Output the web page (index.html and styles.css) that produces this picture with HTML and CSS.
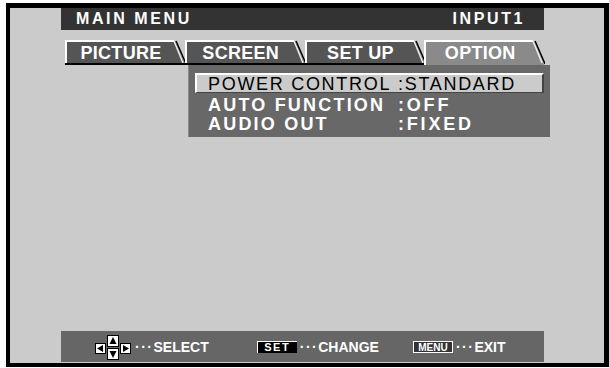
FILE: index.html
```html
<!DOCTYPE html>
<html lang="en">
<head>
    <meta charset="UTF-8">
    <title>Main Menu</title>
    <link rel="stylesheet" href="styles.css">
</head>
<body>
    <div class="screen">
        <div class="title-bar">
            <span>MAIN MENU</span>
            <span>INPUT1</span>
        </div>

        <div class="tabs">
            <div class="tab">
                <svg class="tab-shape" width="121" height="25" viewBox="0 0 121 25">
                    <polygon points="1,25 1,1 110,1 120,25" fill="#555"/>
                    <polyline points="1,25 1,1 109,1" fill="none" stroke="#fff" stroke-width="2"/>
                    <line x1="109" y1="1" x2="118" y2="23" stroke="#eee" stroke-width="1.5"/>
                    <line x1="111" y1="1" x2="121" y2="24" stroke="#000" stroke-width="1.5"/>
                    <line x1="0" y1="24" x2="121" y2="24" stroke="#000" stroke-width="2"/>
                </svg>
                <span>PICTURE</span>
            </div>
            <div class="tab">
                <svg class="tab-shape" width="121" height="25" viewBox="0 0 121 25">
                    <polygon points="1,25 1,1 110,1 120,25" fill="#555"/>
                    <polyline points="1,25 1,1 109,1" fill="none" stroke="#fff" stroke-width="2"/>
                    <line x1="109" y1="1" x2="118" y2="23" stroke="#eee" stroke-width="1.5"/>
                    <line x1="111" y1="1" x2="121" y2="24" stroke="#000" stroke-width="1.5"/>
                    <line x1="0" y1="24" x2="121" y2="24" stroke="#000" stroke-width="2"/>
                </svg>
                <span>SCREEN</span>
            </div>
            <div class="tab">
                <svg class="tab-shape" width="121" height="25" viewBox="0 0 121 25">
                    <polygon points="1,25 1,1 110,1 120,25" fill="#555"/>
                    <polyline points="1,25 1,1 109,1" fill="none" stroke="#fff" stroke-width="2"/>
                    <line x1="109" y1="1" x2="118" y2="23" stroke="#eee" stroke-width="1.5"/>
                    <line x1="111" y1="1" x2="121" y2="24" stroke="#000" stroke-width="1.5"/>
                    <line x1="0" y1="24" x2="121" y2="24" stroke="#000" stroke-width="2"/>
                </svg>
                <span>SET UP</span>
            </div>
            <div class="tab active">
                <svg class="tab-shape" width="121" height="25" viewBox="0 0 121 25">
                    <polygon points="1,25 1,1 110,1 120,25" fill="#8a8a8a"/>
                    <polyline points="1,25 1,1 109,1" fill="none" stroke="#fff" stroke-width="2"/>
                    <line x1="109" y1="1" x2="118" y2="23" stroke="#eee" stroke-width="1.5"/>
                    <line x1="111" y1="1" x2="121" y2="24" stroke="#000" stroke-width="1.5"/>
                </svg>
                <span>OPTION</span>
            </div>
        </div>

        <div class="panel">
            <div class="row selected">
                <span class="label">POWER CONTROL</span>
                <span class="value">:STANDARD</span>
            </div>
            <div class="row">
                <span class="label">AUTO FUNCTION</span>
                <span class="value">:OFF</span>
            </div>
            <div class="row">
                <span class="label">AUDIO OUT</span>
                <span class="value">:FIXED</span>
            </div>
        </div>

        <div class="footer">
            <div class="hint select">
                <svg class="arrows" width="37" height="25" viewBox="0 0 37 25">
                    <rect x="0.5" y="8.5" width="10" height="10" fill="#fff" stroke="#000"/>
                    <polygon points="2,13.5 8,10 8,17" fill="#000"/>
                    <rect x="12.5" y="0.5" width="11" height="11" fill="#fff" stroke="#000"/>
                    <polygon points="18,2 14.5,9 21.5,9" fill="#000"/>
                    <rect x="12.5" y="13.5" width="11" height="11" fill="#fff" stroke="#000"/>
                    <polygon points="18,23 14.5,16 21.5,16" fill="#000"/>
                    <rect x="25.5" y="8.5" width="10" height="10" fill="#fff" stroke="#000"/>
                    <polygon points="34,13.5 28,10 28,17" fill="#000"/>
                </svg>
                <span class="dots">···</span>SELECT
            </div>
            <div class="hint change">
                <span class="key key-set">SET</span>
                <span class="dots">···</span>CHANGE
            </div>
            <div class="hint exit">
                <span class="key key-menu">MENU</span>
                <span class="dots">···</span>EXIT
            </div>
        </div>
    </div>
</body>
</html>
```

FILE: styles.css
```css
body {
    margin: 0;
    background: #fff;
    font-family: "Liberation Sans", Arial, sans-serif;
}

.screen {
    box-sizing: border-box;
    width: 603px;
    height: 364px;
    margin: 3px 0 0 6px;
    background: #cbcbcb;
    border: 5px solid #000;
    border-left-width: 4px;
    border-bottom-width: 4px;
    padding: 0 60px 1px 51px;
    display: flex;
    flex-direction: column;
}

/* top bar */
.title-bar {
    height: 22px;
    background: #333;
    color: #fff;
    font-weight: bold;
    font-size: 16px;
    letter-spacing: 2.6px;
    display: flex;
    justify-content: space-between;
    align-items: center;
    padding: 0 19px 0 15px;
}

/* tabs */
.tabs {
    display: flex;
    margin: 10px 0 0 4px;
    height: 25px;
}

.tab {
    position: relative;
    width: 121px;
    height: 25px;
}

.tab-shape {
    position: absolute;
    left: 0;
    top: 0;
}

.tab span {
    position: relative;
    display: block;
    width: 112px;
    text-align: center;
    color: #fff;
    font-weight: bold;
    font-size: 18px;
    letter-spacing: 0.3px;
    line-height: 26px;
}

/* option panel */
.panel {
    box-sizing: border-box;
    width: 362px;
    height: 72px;
    margin-left: 127px;
    background: #686868;
    border-left: 1px solid #8a8a8a;
    padding: 8px 6px 0 6px;
}

.row {
    display: flex;
    height: 19px;
    line-height: 19px;
    padding-left: 13px;
    color: #fff;
    font-weight: bold;
    font-size: 18px;
    letter-spacing: 2.2px;
}

.row.selected {
    height: 20px;
    line-height: 18px;
    margin-bottom: 3px;
    background: #cbcbcb;
    color: #000;
    font-weight: normal;
    letter-spacing: 1.7px;
    border-top: 2px solid #fff;
    border-left: 2px solid #fff;
    border-right: 2px solid #444;
    border-bottom: 1px solid #444;
    padding-left: 11px;
    box-sizing: border-box;
}

.label {
    width: 190px;
    white-space: pre;
}

.row .value {
    letter-spacing: 2.8px;
}

.row.selected .value {
    letter-spacing: 1.7px;
}

/* footer help bar */
.footer {
    margin-top: auto;
    height: 31px;
    background: #666;
    color: #fff;
    font-weight: bold;
    font-size: 14px;
    display: flex;
    align-items: center;
    padding-left: 34px;
}

.hint {
    display: flex;
    align-items: center;
}

.arrows {
    margin-top: 1px;
}

.dots {
    letter-spacing: 1.5px;
    margin: 0 0 0 3px;
    font-size: 14px;
}

.change {
    margin-left: 48px;
}

.exit {
    margin-left: 34px;
}

.key {
    box-sizing: border-box;
    display: inline-block;
    width: 40px;
    height: 12px;
    font-size: 11px;
    line-height: 11px;
    text-align: center;
    letter-spacing: 1.5px;
}

.key-set {
    background: #000;
    border-top: 1px solid #fff;
    border-left: 1px solid #fff;
}

.key-menu {
    background: #333;
    border: 1px solid #fff;
    font-size: 10px;
    letter-spacing: 0;
}
```
